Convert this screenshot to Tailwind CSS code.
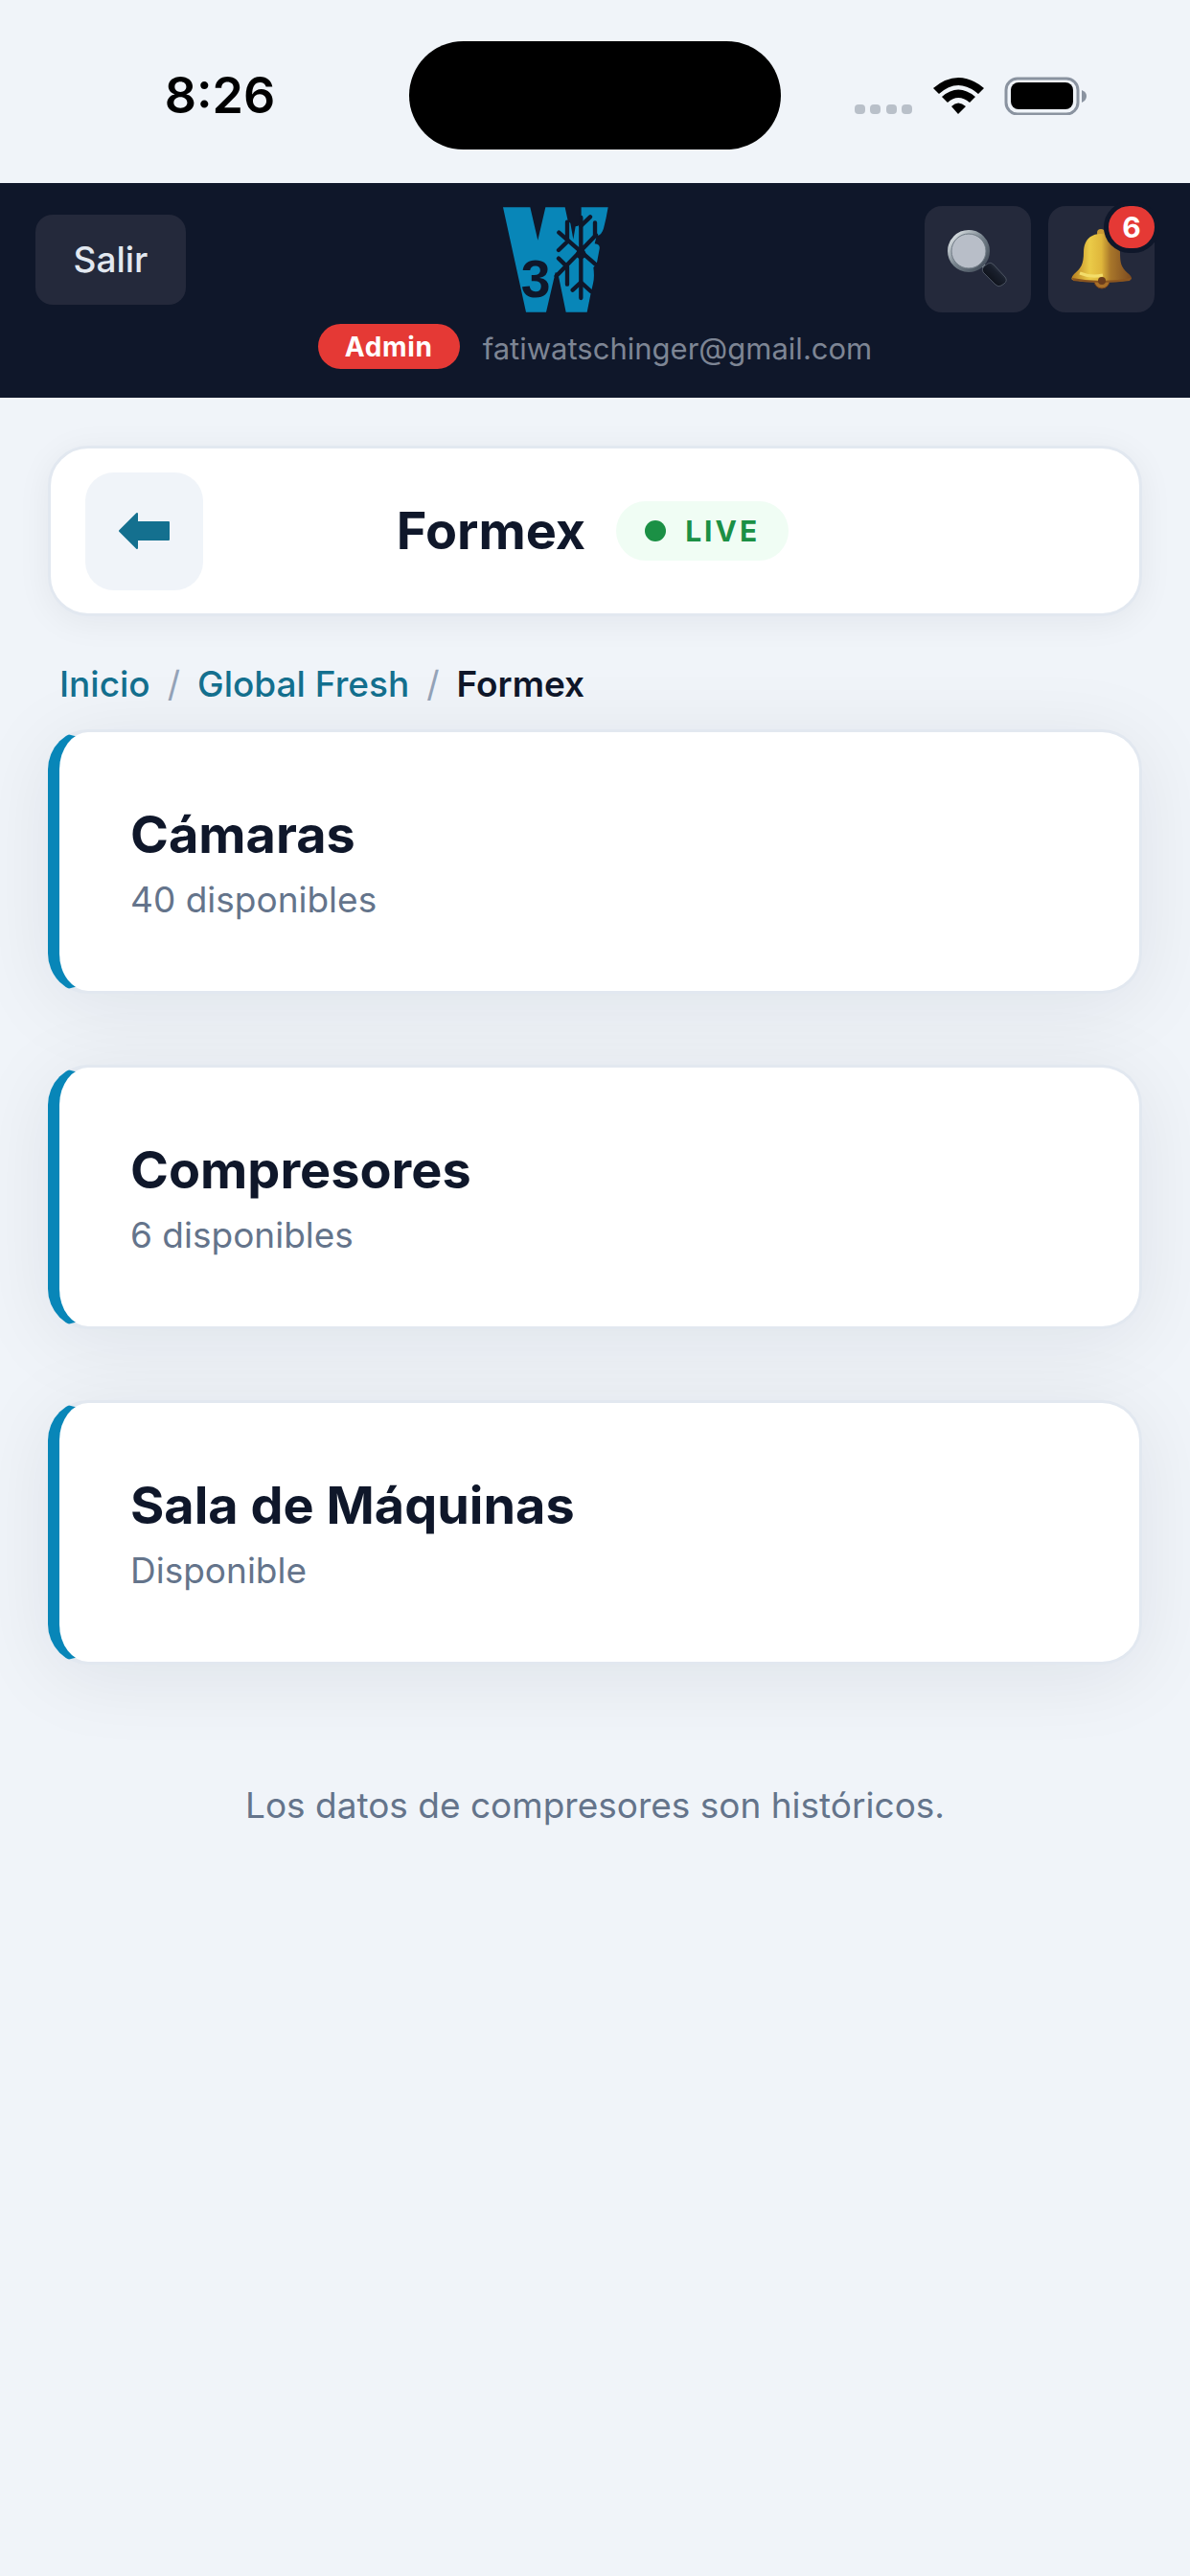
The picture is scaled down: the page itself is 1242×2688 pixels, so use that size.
<!DOCTYPE html>
<html lang="es">

<head>
    <meta charset="UTF-8">
    <meta name="viewport" content="width=device-width, initial-scale=1.0">
    <title>Formex</title>
    <script src="https://cdn.jsdelivr.net/npm/@tailwindcss/browser@4"></script>
</head>

<body class="min-h-screen bg-[#f0f4f9] font-['Inter','Liberation_Sans',sans-serif] text-[#0f172a]">
    <!-- Status bar -->
    <div class="h-[191px] grid grid-cols-[1fr_388px_1fr] items-center pt-2 text-black">
        <span class="justify-self-center text-[52px] leading-none font-semibold pl-8">8:26</span>
        <div class="h-[113px] rounded-full bg-black"></div>
        <div class="flex items-center justify-end pr-[107px]">
            <svg class="w-[243px] h-[40px]" viewBox="0 0 243 40">
                <g fill="#b9c0c9">
                    <rect x="0" y="29" width="11" height="10" rx="4" />
                    <rect x="16" y="29" width="11" height="10" rx="4" />
                    <rect x="33" y="29" width="11" height="10" rx="4" />
                    <rect x="49" y="29" width="11" height="10" rx="4" />
                </g>
                <path d="M82 12 Q108 -10 135 12 L129 18 Q108 0 88 18Z M91 21 Q108 6 126 21 L120 27 Q108 17 97 27Z M101 31 Q108 24 116 31 L108 39Z" />
                <rect x="158" y="2" width="75" height="37" rx="12" fill="none" stroke="#8a93a0" stroke-width="3" />
                <rect x="163" y="6" width="65" height="28" rx="8" />
                <path d="M237 14 Q242 16 242 20 Q242 25 237 27Z" fill="#8a93a0" />
            </svg>
        </div>
    </div>

    <!-- Header -->
    <header class="bg-[#0f172a] px-[37px] pt-6 pb-[28px]">
        <div class="flex items-center justify-between">
            <button class="w-[157px] h-[94px] rounded-[18px] bg-[#24293b] text-[37px] font-medium text-[#e2e8f0]">Salir</button>
            <svg class="w-[110px] h-[110px]" viewBox="73 62 330 328" role="img" aria-label="W3">
                <path fill="#0886b8" d="M73 62H158L182 165L206 62H267L276 104L284 112L293 162L300 122L308 120L318 108V62H402Q396 98 388 128Q382 150 366 152L360 176Q378 178 375 192L366 240L356 250Q360 280 355 300L348 330L336 390H270L245 268L237 266L208 390H145Z" />
                <g fill="none" stroke="#0f172a" stroke-width="13" stroke-linecap="round" stroke-linejoin="round">
                    <path d="M317 94V346M248 141L362 240M364 149L240 277" />
                    <path d="M274 108V166M247 196L272 172M247 222L274 248V303M361 110V150M317 120L346 92M291 321L317 297L348 325" />
                    <circle cx="317" cy="208" r="9" fill="#0f172a" />
                </g>
                <text x="129" y="343" fill="#0f172a" font-family="Liberation Sans, sans-serif" font-weight="bold" font-size="166">3</text>
            </svg>
            <div class="flex gap-[18px]">
                <button aria-label="Buscar" class="size-[111px] rounded-[18px] bg-[#24293b] flex items-center justify-center">
                    <svg class="size-[66px]" viewBox="0 0 66 66">
                        <defs>
                            <linearGradient id="rim" x1="0" y1="0" x2="1" y2="1">
                                <stop offset="0" stop-color="#eef3f5" />
                                <stop offset=".5" stop-color="#75818b" />
                                <stop offset="1" stop-color="#3c4653" />
                            </linearGradient>
                            <linearGradient id="handle" x1="0" y1="1" x2="1" y2="0">
                                <stop offset="0" stop-color="#05070c" />
                                <stop offset=".6" stop-color="#1a202d" />
                                <stop offset="1" stop-color="#566072" />
                            </linearGradient>
                        </defs>
                        <path d="M36 37L43 44" stroke="#9aa4ac" stroke-width="4" />
                        <path d="M38 46Q36 43 39 40L43 37Q46 35 49 38L61 51Q64 55 60 58L57 60Q54 62 51 59Z" fill="url(#handle)" stroke="#4a5260" />
                        <circle cx="23" cy="24" r="20" fill="#b8bec8" stroke="url(#rim)" stroke-width="4" />
                        <circle cx="23" cy="24" r="18" fill="none" stroke="#6f7a84" />
                    </svg>
                </button>
                <button aria-label="Notificaciones" class="relative size-[111px] rounded-[18px] bg-[#24293b] flex items-center justify-center">
                    <svg class="size-[66px]" viewBox="0 0 66 66">
                        <defs>
                            <linearGradient id="gold" x1="0" x2="1">
                                <stop offset="0" stop-color="#b77e20" />
                                <stop offset=".3" stop-color="#ebcb48" />
                                <stop offset=".5" stop-color="#dfb63b" />
                                <stop offset=".65" stop-color="#a8762a" />
                                <stop offset="1" stop-color="#7c4a20" />
                            </linearGradient>
                        </defs>
                        <circle cx="32" cy="5" r="4" fill="#c99a34" />
                        <circle cx="33" cy="55" r="8" fill="#a96f28" stroke="#71401d" />
                        <path d="M32 6C20 6 14 14 14 25C14 38 11 42 4 48Q0 52 2 54Q16 57 32 56Q50 57 63 54Q66 52 60 47C53 41 52 36 52 25C51 13 44 6 32 6Z" fill="url(#gold)" />
                        <path d="M2 52Q32 58 64 52L62 55Q32 59 3 55Z" fill="#8b551f" />
                        <path d="M10 47Q22 52 34 49" stroke="#f3dd6a" stroke-width="3" fill="none" />
                        <circle cx="33" cy="55" r="4" fill="#6c3d1d" />
                    </svg>
                    <span class="absolute -top-[5px] -right-[5px] w-[58px] h-[54px] rounded-full border-5 border-[#0f172a] bg-[#e53935] flex items-center justify-center text-[30px] leading-none font-bold text-white">6</span>
                </button>
            </div>
        </div>
        <div class="mt-[10px] flex items-center justify-center gap-6">
            <span class="h-[47px] px-7 rounded-full bg-[#e53935] flex items-center text-[28px] font-bold tracking-wide text-white">Admin</span>
            <span class="text-[31px] leading-[47px] pt-1 text-[#7d8594]">fatiwatschinger@gmail.com</span>
        </div>
    </header>

    <main class="px-[50px] pt-[50px]">
        <div class="h-[178px] px-9 flex items-center justify-between rounded-[42px] border-3 border-[#e2e8f0] bg-white shadow-[0_6px_36px_rgba(15,23,42,0.06)]">
            <button aria-label="Volver" class="size-[123px] rounded-[30px] bg-[#f0f4f9] flex items-center justify-center">
                <svg class="w-[55px] h-[40px]" viewBox="0 0 55 40">
                    <path d="M2 20L20 2V11H53V29H20V38Z" fill="#14708f" stroke="#14708f" stroke-width="2" stroke-linejoin="round" />
                </svg>
            </button>
            <div class="flex items-center gap-8">
                <h1 class="text-[54px] leading-none font-bold">Formex</h1>
                <span class="h-[62px] px-[30px] rounded-full bg-[#f0fdf4] flex items-center gap-5 text-[30px] font-bold tracking-widest text-[#1b9045]">
                    <span class="size-[22px] rounded-full bg-[#1b9045]"></span>LIVE
                </span>
            </div>
            <div class="w-32"></div>
        </div>

        <nav aria-label="Ruta" class="mt-[46px] mb-[23px] px-3 flex gap-[18px] text-[37px] leading-[49px] font-medium text-[#14708f]">
            <a href="#">Inicio</a>
            <span class="font-normal text-[#94a3b8]">/</span>
            <a href="#">Global Fresh</a>
            <span class="font-normal text-[#94a3b8]">/</span>
            <span class="font-semibold text-[#0f172a]" aria-current="page">Formex</span>
        </nav>

        <div class="flex flex-col gap-[74px]">
            <a href="#" class="block h-[276px] pl-[74px] pt-[71px] rounded-[42px] border-3 border-l-12 border-[#e2e8f0] border-l-[#0886b8] bg-white shadow-[0_12px_84px_rgba(15,23,42,0.08)]">
                <h2 class="text-[54px] leading-[72px] font-bold">Cámaras</h2>
                <p class="text-[37px] leading-[64px] text-[#64748b]">40 disponibles</p>
            </a>
            <a href="#" class="block h-[276px] pl-[74px] pt-[71px] rounded-[42px] border-3 border-l-12 border-[#e2e8f0] border-l-[#0886b8] bg-white shadow-[0_12px_84px_rgba(15,23,42,0.08)]">
                <h2 class="text-[54px] leading-[72px] font-bold">Compresores</h2>
                <p class="text-[37px] leading-[64px] text-[#64748b]">6 disponibles</p>
            </a>
            <a href="#" class="block h-[276px] pl-[74px] pt-[71px] rounded-[42px] border-3 border-l-12 border-[#e2e8f0] border-l-[#0886b8] bg-white shadow-[0_12px_84px_rgba(15,23,42,0.08)]">
                <h2 class="text-[54px] leading-[72px] font-bold">Sala de Máquinas</h2>
                <p class="text-[37px] leading-[64px] text-[#64748b]">Disponible</p>
            </a>
        </div>

        <p class="mt-[122px] text-center text-[37px] leading-[50px] text-[#64748b]">Los datos de compresores son históricos.</p>
    </main>
</body>

</html>
